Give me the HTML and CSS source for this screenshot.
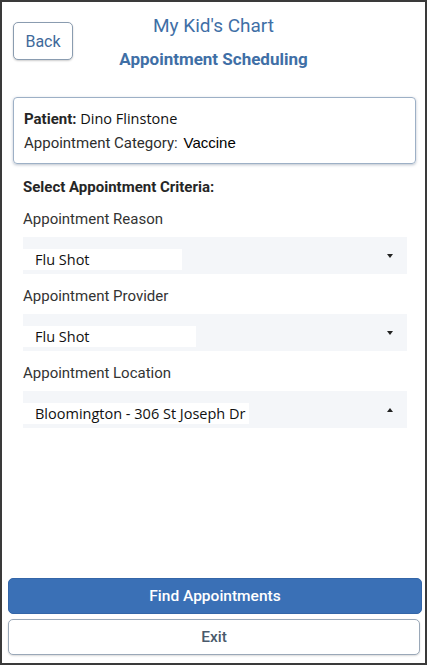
FILE: index.html
```html
<!DOCTYPE html>
<html lang="en">
<head>
    <meta charset="UTF-8">
    <meta name="viewport" content="width=device-width, initial-scale=1.0">
    <title>My Kid's Chart - Appointment Scheduling</title>
    <link rel="stylesheet" href="styles.css">
</head>
<body>
    <div class="screen">
        <div class="header">
            <div class="header-left">
                <button class="back-btn">Back</button>
            </div>
            <div class="header-title">
                <h1>My Kid's Chart</h1>
                <h2>Appointment Scheduling</h2>
            </div>
            <div></div>
        </div>

        <div class="patient-card">
            <div class="patient-row"><strong>Patient:</strong> <span class="edited">Dino Flinstone</span></div>
            <div class="patient-row">Appointment Category: <span class="plain">Vaccine</span></div>
        </div>

        <div class="criteria">
            <div class="criteria-title">Select Appointment Criteria:</div>

            <label class="field-label">Appointment Reason</label>
            <div class="select">
                <span class="select-value" style="width: 159px;">Flu Shot</span>
                <span class="caret down"></span>
            </div>

            <label class="field-label">Appointment Provider</label>
            <div class="select">
                <span class="select-value" style="width: 173px;">Flu Shot</span>
                <span class="caret down"></span>
            </div>

            <label class="field-label">Appointment Location</label>
            <div class="select">
                <span class="select-value" style="width: 226px;">Bloomington - 306 St Joseph Dr</span>
                <span class="caret up"></span>
            </div>
        </div>

        <div class="actions">
            <button class="btn btn-primary">Find Appointments</button>
            <button class="btn btn-outline">Exit</button>
        </div>
    </div>
</body>
</html>
```

FILE: styles.css
```css
body {
    margin: 0;
    font-family: Roboto, "Liberation Sans", sans-serif;
    background: #ffffff;
}

.screen {
    width: 427px;
    height: 665px;
    box-sizing: border-box;
    border: 2px solid #3a3a3a;
    display: flex;
    flex-direction: column;
    background: #ffffff;
}

.header {
    display: grid;
    grid-template-columns: 1fr auto 1fr;
    padding: 11px 0 0 11px;
}

.header-left {
    padding-top: 9px;
}

.back-btn {
    width: 60px;
    height: 38px;
    background: #ffffff;
    border: 1.5px solid #8a9cb0;
    border-radius: 5px;
    box-shadow: 0 1px 2px rgba(0, 0, 0, 0.2);
    color: #3f6a9a;
    font-family: Roboto, sans-serif;
    font-size: 16px;
    padding: 0;
}

.header-title {
    text-align: center;
    padding-right: 11px;
}

.header-title h1 {
    margin: 0;
    font-size: 19px;
    font-weight: 400;
    color: #3f6fa6;
    line-height: 26px;
}

.header-title h2 {
    margin: 9px 0 0;
    font-size: 17px;
    font-weight: 700;
    color: #3f6fa6;
    line-height: 22px;
}

.patient-card {
    margin: 27px 9px 0 11px;
    border: 1.5px solid #9db0c6;
    border-radius: 4px;
    box-shadow: 0 1px 3px rgba(60, 80, 110, 0.35);
    padding: 9px 10px 8px;
    color: #2e2e2e;
    font-size: 15px;
}

.patient-row {
    line-height: 24px;
}

.patient-row strong {
    color: #262626;
}

.edited {
    font-family: "Open Sans", sans-serif;
    font-size: 14.5px;
    color: #111111;
}

.plain {
    font-family: "Liberation Sans", sans-serif;
    color: #000000;
    margin-left: 2px;
}

.criteria {
    padding: 13px 18px 0 21px;
    display: flex;
    flex-direction: column;
}

.criteria-title {
    font-size: 15px;
    font-weight: 700;
    color: #262626;
    line-height: 20px;
}

.field-label {
    font-size: 15px;
    color: #333333;
    line-height: 20px;
    margin-top: 12px;
    margin-bottom: 8px;
}

.select {
    height: 37px;
    background: #f4f6f9;
    display: flex;
    align-items: center;
    justify-content: space-between;
    padding-right: 14px;
}

.select-value {
    box-sizing: border-box;
    background: #ffffff;
    margin-top: 7px;
    height: 21px;
    padding-left: 12px;
    font-family: "Open Sans", sans-serif;
    font-size: 14.5px;
    line-height: 21px;
    color: #111111;
    white-space: nowrap;
}

.caret {
    width: 0;
    height: 0;
    border-left: 3.5px solid transparent;
    border-right: 3.5px solid transparent;
}

.caret.down {
    border-top: 4px solid #222222;
}

.caret.up {
    border-bottom: 4px solid #222222;
}

.actions {
    margin-top: auto;
    padding: 0 3px 8px 6px;
    display: flex;
    flex-direction: column;
    gap: 5px;
}

.btn {
    height: 36px;
    border-radius: 5px;
    font-family: Roboto, sans-serif;
    font-size: 15.5px;
    font-weight: 500;
    cursor: pointer;
}

.btn-primary {
    background: #3a70b6;
    border: 1px solid #3466a8;
    color: #ffffff;
}

.btn-outline {
    background: #ffffff;
    border: 1.5px solid #9aa8b8;
    color: #4a5a6c;
    margin-right: 2px;
    box-shadow: 0 1px 2px rgba(0, 0, 0, 0.15);
}
```
